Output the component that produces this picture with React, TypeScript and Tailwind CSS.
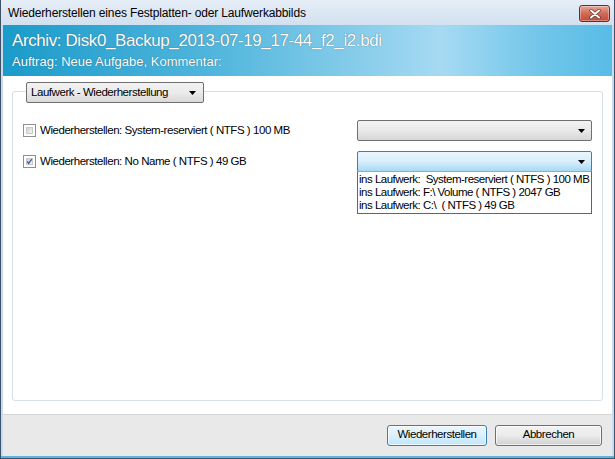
import React from 'react';

const font = { fontFamily: '"Liberation Sans", Arial, sans-serif' };

const Arrow = () => (
  <svg width="7" height="4" viewBox="0 0 7 4" className="shrink-0">
    <path d="M0 0h7L3.5 4z" fill="#000" />
  </svg>
);

const Checkbox = ({ checked }: { checked?: boolean }) => (
  <div className="w-[13px] h-[13px] border border-[#8e8f8f] bg-white p-[2px] shrink-0">
    <div className="w-full h-full bg-gradient-to-br from-[#cbcfd5] to-[#f6f6f6] border border-[#c6c8cb] flex items-center justify-center">
      {checked && (
        <svg width="9" height="9" viewBox="0 0 9 9" className="-m-[1px]">
          <path d="M1.5 4.5l2 2.5 4-5.5" stroke="#4a5f97" strokeWidth="1.8" fill="none" />
        </svg>
      )}
    </div>
  </div>
);

const drives = [
  'ins Laufwerk:  System-reserviert ( NTFS ) 100 MB',
  'ins Laufwerk: F:\\ Volume ( NTFS ) 2047 GB',
  'ins Laufwerk: C:\\  ( NTFS ) 49 GB',
];

export default function App() {
  return (
    <div
      className="w-[615px] h-[459px] flex flex-col bg-[#c9dbee] border-l border-r border-[#3d5266] text-[11.5px] tracking-[-0.45px] text-black overflow-hidden"
      style={font}
    >
      {/* Title bar */}
      <div className="h-[25px] shrink-0 flex items-center justify-between pl-[7px] pr-[4px] bg-gradient-to-b from-[#e6eef8] to-[#d2e0ef]">
        <span className="text-[12px] tracking-[-0.15px] leading-none">Wiederherstellen eines Festplatten- oder Laufwerkabbilds</span>
        <button className="w-[31px] h-[17px] mt-[2px] rounded-[3px] border border-[#6f2a22] bg-gradient-to-b from-[#e8a798] via-[#d16a57] to-[#c4483a] flex items-center justify-center shadow-[inset_0_0_0_1px_rgba(255,255,255,0.35)]">
          <svg width="12" height="10" viewBox="0 0 12 10">
            <path d="M2 1.5l8 7M10 1.5l-8 7" stroke="#44302c" strokeWidth="3.2" strokeLinecap="round" />
            <path d="M2 1.5l8 7M10 1.5l-8 7" stroke="#fff" strokeWidth="2" strokeLinecap="round" />
          </svg>
        </button>
      </div>

      <div className="flex-1 flex flex-col mx-[2px]">
        {/* Header banner */}
        <div className="h-[51px] shrink-0 px-[9px] pt-[5px] bg-[linear-gradient(90deg,#1a9bca_0%,#52b6dd_35%,#a6daf2_72%,#72c6ea_88%,#58bce6_100%)] text-white [text-shadow:0_0_1px_rgba(40,70,90,0.9)]">
          <div className="text-[17px] tracking-[-0.4px] leading-[22px] font-light">Archiv: Disk0_Backup_2013-07-19_17-44_f2_i2.bdi</div>
          <div className="text-[13px] tracking-[0px] leading-[18px] mt-[1px]">Auftrag: Neue Aufgabe, Kommentar:</div>
        </div>

        {/* Content */}
        <div className="flex-1 bg-white pt-[15px] px-[9px] pb-[13px] flex">
          <div className="flex-1 border border-[#d5dfe5] rounded-[3px] flex flex-col px-[10px]">
            <div className="-mt-[10px] ml-[3px] w-[178px] h-[21px] rounded-[2px] border border-[#707070] bg-gradient-to-b from-[#f2f2f2] via-[#ebebeb] to-[#d9d9d9] flex items-center justify-between pl-[4px] pr-[7px]">
              <span>Laufwerk - Wiederherstellung</span>
              <Arrow />
            </div>

            <div className="mt-[17px] flex items-center justify-between">
              <div className="flex items-center gap-[4px]">
                <Checkbox />
                <span>Wiederherstellen: System-reserviert ( NTFS ) 100 MB</span>
              </div>
              <div className="w-[235px] h-[21px] rounded-[2px] border border-[#707070] bg-gradient-to-b from-[#f3f3f3] via-[#e9e9e9] to-[#d6d6d6] flex items-center justify-end pr-[6px]">
                <Arrow />
              </div>
            </div>

            <div className="mt-[10px] flex items-center justify-between">
              <div className="flex items-center gap-[4px]">
                <Checkbox checked />
                <span>Wiederherstellen: No Name ( NTFS ) 49 GB</span>
              </div>
              <div className="relative w-[235px]">
                <div className="h-[21px] rounded-[2px] border border-[#3c7fb1] bg-gradient-to-b from-[#eaf6fd] via-[#d7effc] to-[#a7d9f5] flex items-center justify-end pr-[6px]">
                  <Arrow />
                </div>
                <div className="absolute left-0 top-[20px] w-[235px] bg-white border border-[#646464] border-t-[#a7a7a7] pl-[1px] py-[1px] leading-[13px] tracking-[-0.5px] z-10">
                  {drives.map(d => (
                    <div key={d} className="whitespace-pre">{d}</div>
                  ))}
                </div>
              </div>
            </div>
          </div>
        </div>

        {/* Footer */}
        <div className="h-[42px] shrink-0 bg-[#e9e9e9] border-t border-[#d4d4d4] flex items-center justify-end gap-[8px] pr-[10px] pb-[1px]">
          <button className="w-[100px] h-[21px] rounded-[3px] border border-[#3c7fb1] bg-gradient-to-b from-[#eaf6fd] via-[#dcf0fb] to-[#bee6fd] shadow-[inset_0_0_0_1px_rgba(255,255,255,0.7)]">
            Wiederherstellen
          </button>
          <button className="w-[107px] h-[21px] rounded-[3px] border border-[#707070] bg-gradient-to-b from-[#f2f2f2] via-[#ebebeb] to-[#cfcfcf] shadow-[inset_0_0_0_1px_rgba(255,255,255,0.7)]">
            Abbrechen
          </button>
        </div>
      </div>
      <div className="h-[3px] shrink-0 bg-[#5fb3df] border-b border-[#3d5266]" />
    </div>
  );
}
